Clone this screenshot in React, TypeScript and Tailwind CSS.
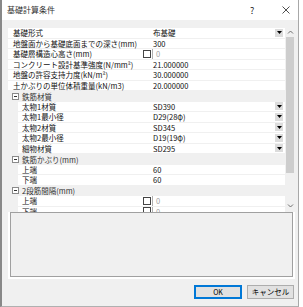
import React from 'react';

type Row = {
  name: string;
  value?: string;
  kind: 'text' | 'dropdown' | 'check' | 'category';
  sub?: boolean;
};

const rows: Row[] = [
  { name: '基礎形式', value: '布基礎', kind: 'dropdown' },
  { name: '地盤面から基礎底面までの深さ(mm)', value: '300', kind: 'text' },
  { name: '基礎層構造心高さ(mm)', value: '0', kind: 'check' },
  { name: 'コンクリート設計基準強度(N/mm²)', value: '21.000000', kind: 'text' },
  { name: '地盤の許容支持力度(kN/m²)', value: '30.000000', kind: 'text' },
  { name: '土かぶりの単位体積重量(kN/m3)', value: '20.000000', kind: 'text' },
  { name: '鉄筋材質', kind: 'category' },
  { name: '太物1材質', value: 'SD390', kind: 'dropdown', sub: true },
  { name: '太物1最小径', value: 'D29(28φ)', kind: 'dropdown', sub: true },
  { name: '太物2材質', value: 'SD345', kind: 'dropdown', sub: true },
  { name: '太物2最小径', value: 'D19(19φ)', kind: 'dropdown', sub: true },
  { name: '細物材質', value: 'SD295', kind: 'dropdown', sub: true },
  { name: '鉄筋かぶり(mm)', kind: 'category' },
  { name: '上端', value: '60', kind: 'text', sub: true },
  { name: '下端', value: '60', kind: 'text', sub: true },
  { name: '2段筋間隔(mm)', kind: 'category' },
  { name: '上端', value: '0', kind: 'check', sub: true },
  { name: '下端', value: '0', kind: 'check', sub: true },
];

const DropButton = () => (
  <div className="w-[8px] h-[8px] bg-[#dcdcdc] flex items-center justify-center shrink-0">
    <svg width="5" height="3" viewBox="0 0 5 3">
      <path d="M0 0h5L2.5 3z" fill="#000" />
    </svg>
  </div>
);

const GridRow = ({ row }: { row: Row }) => {
  if (row.kind === 'category') {
    return (
      <div className="h-[10.5px] flex items-center bg-[#f0f0f0] shrink-0">
        <div className="w-[14px] flex items-center justify-center">
          <div className="w-[7px] h-[7px] border border-[#8a8a8a] bg-white flex items-center justify-center">
            <div className="w-[3px] h-px bg-[#333]" />
          </div>
        </div>
        <span className="text-[#333] whitespace-nowrap">{row.name}</span>
      </div>
    );
  }
  return (
    <div className="h-[10.5px] flex shrink-0 border-b border-[#f0f0f0]">
      {row.sub && <div className="w-[10px] bg-[#f0f0f0] shrink-0" />}
      <div className={`flex items-center bg-white shrink-0 ${row.sub ? 'w-[134px] pl-[4px]' : 'w-[144px] pl-[5px]'}`}>
        <span className="flex-1 whitespace-nowrap text-[#111]">{row.name}</span>
        {row.kind === 'check' && (
          <div className="w-[8px] h-[8px] border border-[#444] bg-white mr-px shrink-0" />
        )}
      </div>
      <div className="flex-1 flex items-center bg-white pr-[2px]">
        {row.kind === 'check' ? (
          <>
            <div className="w-px h-full bg-[#b0b0b0]" />
            <span className="pl-[3px] text-[#a0a0a0]">{row.value}</span>
          </>
        ) : (
          <span className="pl-[1px] flex-1 whitespace-nowrap text-[#111]">{row.value}</span>
        )}
        {row.kind === 'dropdown' && <DropButton />}
      </div>
    </div>
  );
};

export default function App() {
  return (
    <div
      className="w-[303px] h-[307px] bg-white text-[7.5px] leading-none text-black"
      style={{ fontFamily: '"Noto Sans CJK JP", "Noto Sans", sans-serif' }}
    >
      <div className="w-[299px] h-[307px] flex flex-col bg-[#f0f0f0] border-l-2 border-r border-b border-l-[#888888] border-r-[#a8a8a8] border-b-[#b0b0b0]">
        {/* title bar */}
        <div className="h-[20px] bg-white flex items-center shrink-0 pl-[5px]">
          <span className="text-[8px] text-[#333] flex-1">基礎計算条件</span>
          <span className="text-[9px] text-[#222] w-[10px]">?</span>
          <span className="w-[22px]" />
          <svg width="8" height="8" viewBox="0 0 8 8" className="mr-[8px]">
            <path d="M0.5 0.5l7 7M7.5 0.5l-7 7" stroke="#222" strokeWidth="0.8" />
          </svg>
        </div>

        {/* body */}
        <div className="flex-1 flex flex-col pt-[8px] pl-[6px] pr-[3px]">
          <div className="h-[251px] bg-white flex flex-col">
            <div className="h-[184px] flex shrink-0 bg-[#f0f0f0]">
              <div className="flex-1 flex flex-col overflow-hidden">
                {rows.map((r, i) => (
                  <GridRow key={i} row={r} />
                ))}
              </div>
              {/* scrollbar */}
              <div className="w-[10px] bg-[#f0f0f0] flex flex-col items-center shrink-0">
                <svg width="7" height="8" viewBox="0 0 7 8" className="shrink-0">
                  <path d="M1 5.5l2.5-2.5 2.5 2.5" stroke="#606060" strokeWidth="0.9" fill="none" />
                </svg>
                <div className="w-[8px] h-[136px] bg-[#cdcdcd] mt-px" />
                <div className="flex-1" />
                <svg width="7" height="8" viewBox="0 0 7 8" className="shrink-0 mb-[2px]">
                  <path d="M1 2.5l2.5 2.5 2.5-2.5" stroke="#606060" strokeWidth="0.9" fill="none" />
                </svg>
              </div>
            </div>
            {/* description */}
            <div className="h-[65px] mx-[2px] border border-[#a0a0a0] bg-[#f0f0f0]" />
          </div>

          {/* buttons */}
          <div className="flex justify-end gap-[5px] mt-[6px] pr-px">
            <button className="w-[48px] h-[14px] border border-[#0078d7] bg-[#e1e1e1] flex items-center justify-center text-[7px] text-black outline outline-1 outline-[#0078d7] -outline-offset-2">
              OK
            </button>
            <button className="w-[47px] h-[14px] border border-[#adadad] bg-[#e1e1e1] flex items-center justify-center text-[7.5px] text-black">
              キャンセル
            </button>
          </div>
        </div>
      </div>
    </div>
  );
}
